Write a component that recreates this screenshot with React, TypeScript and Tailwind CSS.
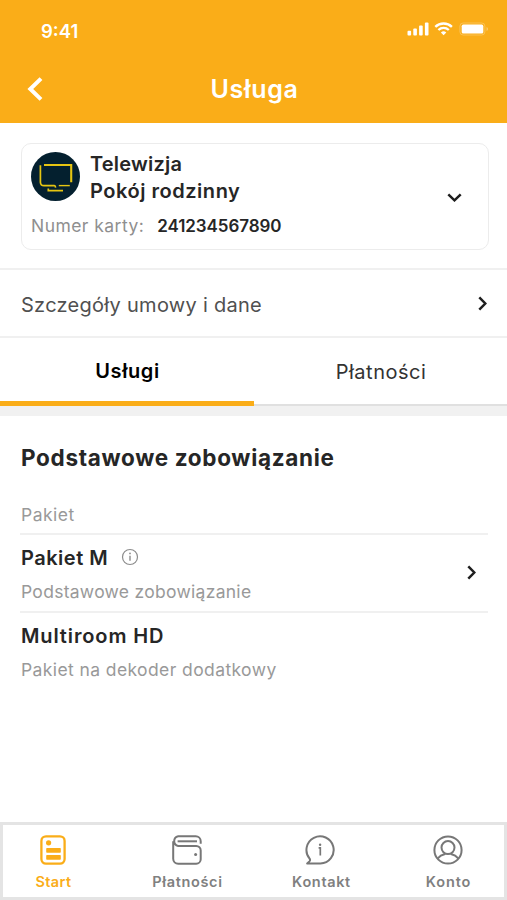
import type { ReactNode } from "react";

type IconProps = { className?: string };

function ChevronIcon({ className = "" }: IconProps) {
  return (
    <svg width="9" height="15" viewBox="0 0 9 15" fill="none" className={className} aria-hidden="true">
      <path d="M1.3 1.3L7.3 7.5L1.3 13.7" stroke="#1f1f1f" strokeWidth="2.5" />
    </svg>
  );
}

function StatusIcons() {
  return (
    <svg width="82" height="14" viewBox="0 0 82 14" fill="none" aria-hidden="true">
      <g fill="#fff">
        <rect x="0.5" y="8.8" width="3.6" height="4.6" rx="0.9" />
        <rect x="6.3" y="6.5" width="3.6" height="6.9" rx="0.9" />
        <rect x="12.1" y="3.6" width="3.6" height="9.8" rx="0.9" />
        <rect x="17.9" y="0.6" width="3.6" height="12.8" rx="0.9" />
      </g>
      <path
        d="M28.3 4.9a11.8 11.8 0 0 1 16.6 0M31.4 8a7.4 7.4 0 0 1 10.4 0"
        stroke="#fff"
        strokeWidth="2.3"
      />
      <path d="M36.6 13.3L33.9 10.6a3.9 3.9 0 0 1 5.4 0z" fill="#fff" />
      <rect x="52.9" y="1" width="25" height="12" rx="3.2" stroke="#fff" strokeOpacity="0.25" />
      <rect x="54.7" y="2.6" width="21.6" height="8.9" rx="1.6" fill="#fff" />
      <path d="M79.6 5v4a2 2 0 0 0 1.3-2 2 2 0 0 0-1.3-2z" fill="#fff" fillOpacity="0.4" />
    </svg>
  );
}

function TvIcon() {
  return (
    <svg width="49" height="49" viewBox="0 0 49 49" fill="none" className="flex-shrink-0" aria-hidden="true">
      <circle cx="24.5" cy="24.5" r="24.5" fill="#04202f" />
      <g stroke="#e6c512">
        <path d="M13 13H40.2V30.2" strokeWidth="2.1" />
        <path d="M9.4 13.2V30.2Q9.6 33.6 13 33.6H23.4Q24.4 33.6 24.6 35.6" strokeWidth="1.7" />
        <path d="M27.8 33.6H38.8" strokeWidth="1.4" />
        <path d="M17.3 36.6V38.6H32" strokeWidth="1.7" />
      </g>
    </svg>
  );
}

function StartIcon() {
  return (
    <svg width="30" height="30" viewBox="0 0 30 30" fill="none" aria-hidden="true">
      <rect x="3.4" y="1.3" width="23.2" height="27.4" rx="4.6" stroke="#faad18" strokeWidth="2.3" />
      <g fill="#faad18">
        <circle cx="10.6" cy="7.8" r="2.6" />
        <rect x="8.2" y="13" width="14.6" height="4.8" rx="0.8" />
        <rect x="8.2" y="20" width="14.6" height="4.8" rx="0.8" />
      </g>
    </svg>
  );
}

function WalletIcon() {
  return (
    <svg width="30" height="30" viewBox="0 0 30 30" fill="none" stroke="#777" strokeWidth="2" aria-hidden="true">
      <path d="M28.7 8.8V6.2a5 5 0 0 0-5-5H6.2a5 5 0 0 0 0 9.8h18a4.5 4.5 0 0 1 4.5 4.5v8.7a4.5 4.5 0 0 1-4.5 4.5H6.2a5 5 0 0 1-5-5V6.2" />
      <path d="M5.6 6.3H25" />
      <circle cx="23.6" cy="19.6" r="1.5" fill="#777" stroke="none" />
    </svg>
  );
}

function ContactIcon() {
  return (
    <svg
      width="30"
      height="30"
      viewBox="0 0 30 30"
      fill="none"
      stroke="#777"
      strokeWidth="2"
      className="-ml-[2px]"
      aria-hidden="true"
    >
      <path d="M15.4 28.5A13.6 13.6 0 1 0 4.6 23.6Q5.6 25.2 4.4 26.4L2.2 28.5z" strokeLinejoin="round" />
      <path d="M13.6 12.8H15.3V20.6" strokeWidth="1.7" />
      <circle cx="15.1" cy="9.7" r="1.2" fill="#777" stroke="none" />
    </svg>
  );
}

function AccountIcon() {
  return (
    <svg width="30" height="30" viewBox="0 0 30 30" fill="none" stroke="#777" strokeWidth="2" aria-hidden="true">
      <circle cx="15" cy="15" r="13.6" />
      <circle cx="15" cy="12.6" r="6.5" />
      <path d="M4.5 23.6c2-2.4 4.6-3.9 7.6-4.6M25.5 23.6c-2-2.4-4.6-3.9-7.6-4.6" />
    </svg>
  );
}

type NavItemProps = {
  icon: ReactNode;
  label: string;
  className?: string;
};

function NavItem({ icon, label, className = "text-[#808080] tracking-[0.65px]" }: NavItemProps) {
  return (
    <a className={`flex w-20 flex-col items-center text-[14.5px] font-semibold leading-5 ${className}`}>
      {icon}
      <span className="mt-[7px] pl-px">{label}</span>
    </a>
  );
}

export default function App() {
  return (
    <div className="flex h-[900px] w-[507px] flex-col overflow-hidden bg-white font-['Inter',sans-serif] text-[#262626]">
      <header className="h-[123px] flex-shrink-0 bg-[#faad18] text-white">
        <div className="flex items-start justify-between pl-[41px] pr-[18px] pt-[19px]">
          <span className="text-[18.5px] font-semibold leading-6">9:41</span>
          <div className="pt-[3px]">
            <StatusIcons />
          </div>
        </div>
        <div className="mt-[30px] flex h-8 items-center pl-[27px] pr-[49px]">
          <svg width="16" height="24" viewBox="0 0 16 24" fill="none" aria-hidden="true">
            <path d="M14 1.6L3.3 12L14 22.4" stroke="#fff" strokeWidth="4" />
          </svg>
          <h1 className="flex-1 pl-[8px] text-center text-[25px] font-semibold leading-8 tracking-[0.7px]">
            Usługa
          </h1>
        </div>
      </header>

      <section className="mx-[21px] mt-[20px] h-[107px] w-[468px] flex-shrink-0 rounded-[10px] border-[1.5px] border-[#ececec] pl-[9px] pr-[26px] pt-[7px]">
        <div className="flex">
          <div className="pt-px">
            <TvIcon />
          </div>
          <div className="ml-[10px] flex-1 text-[20px] font-semibold leading-[27px]">
            <p className="tracking-[0.2px]">Telewizja</p>
            <p className="tracking-[0.53px]">Pokój rodzinny</p>
          </div>
          <ChevronIcon className="mt-[39px] mr-[3px] rotate-90" />
        </div>
        <p className="mt-[9px] flex leading-6">
          <span className="text-[17.5px] tracking-[0.45px] text-[#8f8f8f]">Numer karty:</span>
          <span className="ml-[13px] text-[17px] font-semibold tracking-[-0.08px]">241234567890</span>
        </p>
      </section>

      <div className="mt-[18px] flex h-[70px] flex-shrink-0 items-center justify-between border-y-2 border-[#f0f0f0] pl-[21px] pr-[20px]">
        <span className="pt-[3px] text-[20px] leading-7 tracking-[0.28px] text-[#505050]">Szczegóły umowy i dane</span>
        <ChevronIcon />
      </div>

      <div className="flex h-[68px] flex-shrink-0">
        <div className="flex w-[254px] items-center justify-center border-b-[5px] border-[#faad18] pl-px pt-[2px] text-[20px] font-semibold tracking-[0.6px] text-black">
          Usługi
        </div>
        <div className="flex flex-1 items-center justify-center border-b-2 border-[#e0e0e0] pl-px pt-[2px] text-[20px] tracking-[0.5px] text-[#333]">
          Płatności
        </div>
      </div>
      <div className="h-[10px] flex-shrink-0 bg-[#f1f1f1]" />

      <main className="flex-1 px-[20px]">
        <h2 className="mt-[28px] pl-px text-[22.5px] font-bold leading-7 tracking-[0.68px]">Podstawowe zobowiązanie</h2>
        <p className="mt-[31px] pb-[6px] pl-px text-[17.5px] leading-6 tracking-[0.5px] text-[#999]">Pakiet</p>

        <div className="mr-[-1px] flex h-[78px] items-center justify-between border-t-2 border-[#f0f0f0] pr-[12px]">
          <div className="pt-px">
            <p className="flex items-center pl-px text-[20px] font-semibold leading-7 tracking-[0.5px]">
              Pakiet M
              <svg width="18" height="18" viewBox="0 0 18 18" fill="none" className="-mt-px ml-[13px]" aria-hidden="true">
                <circle cx="9" cy="9" r="7.5" stroke="#8c8c8c" strokeWidth="1.2" />
                <path d="M9 7.7V12.8" stroke="#8c8c8c" strokeWidth="1.4" />
                <circle cx="9" cy="5.4" r="0.9" fill="#8c8c8c" />
              </svg>
            </p>
            <p className="mt-[8px] pl-px text-[17.5px] leading-6 tracking-[0.28px] text-[#999]">Podstawowe zobowiązanie</p>
          </div>
          <ChevronIcon className="-mt-[2px]" />
        </div>

        <div className="mr-[-1px] border-t-2 border-[#f0f0f0] pt-[9px]">
          <p className="pl-px text-[20px] font-semibold leading-7 tracking-[0.88px]">Multiroom HD</p>
          <p className="mt-[8px] pl-px text-[17.5px] leading-6 tracking-[0.4px] text-[#999]">Pakiet na dekoder dodatkowy</p>
        </div>
      </main>

      <nav className="flex h-[78px] flex-shrink-0 gap-[54px] border-[3px] border-[#e4e4e4] pl-[10px] pt-[10px]">
        <NavItem icon={<StartIcon />} label="Start" className="text-[#faad18] tracking-[0.4px]" />
        <NavItem icon={<WalletIcon />} label="Płatności" />
        <NavItem icon={<ContactIcon />} label="Kontakt" />
        <div className="-ml-[7px]">
          <NavItem icon={<AccountIcon />} label="Konto" className="text-[#808080] tracking-[0.9px]" />
        </div>
      </nav>
    </div>
  );
}
